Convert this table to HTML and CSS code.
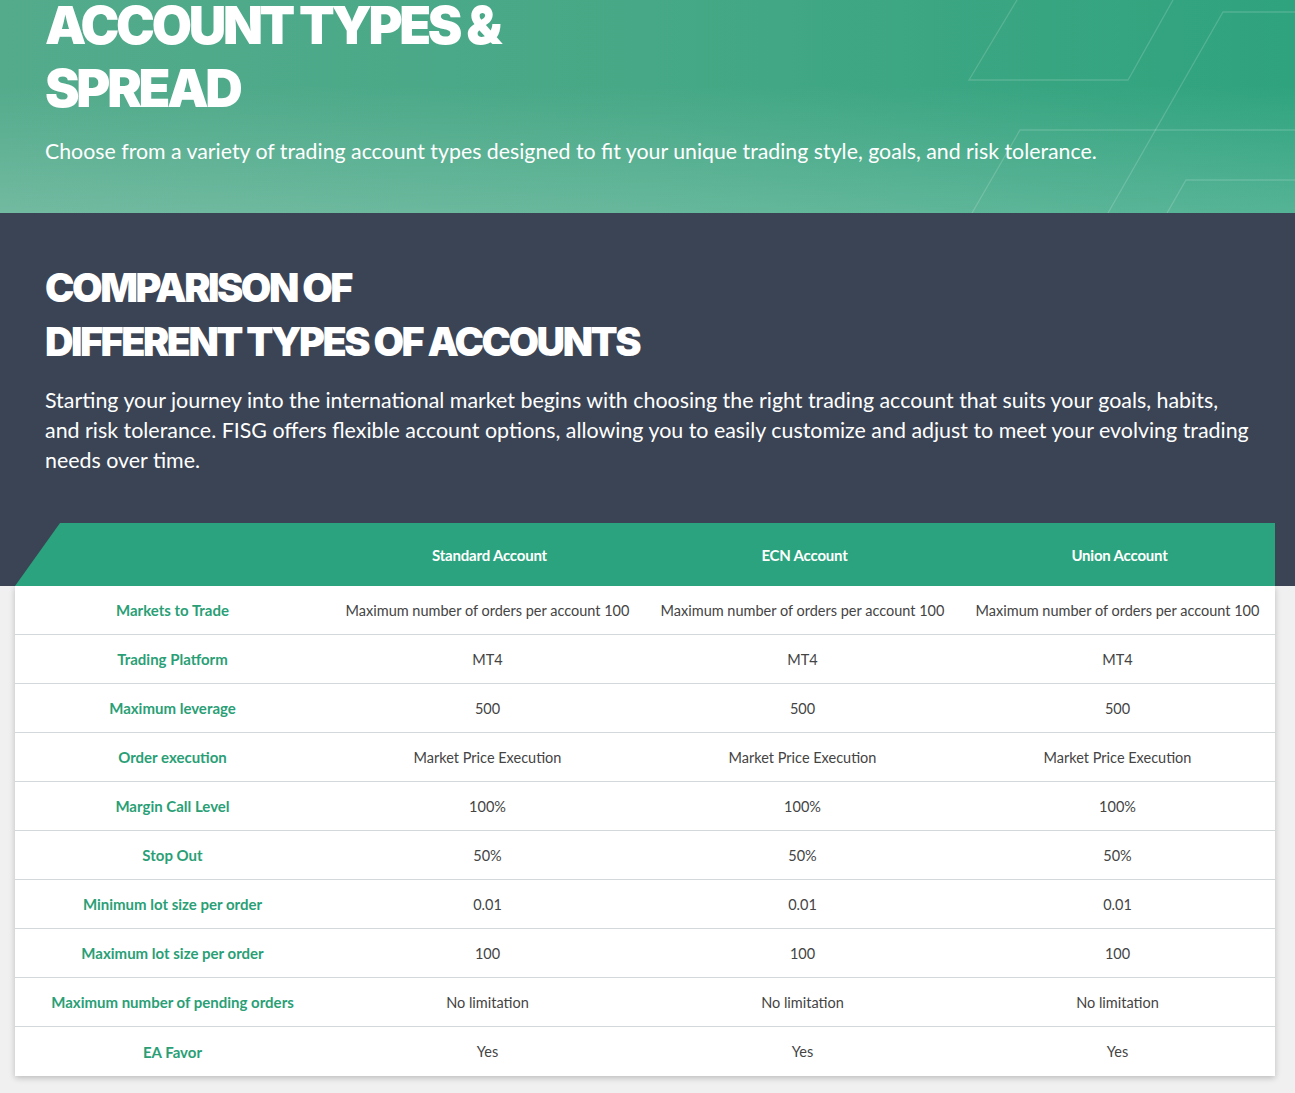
FILE: index.html
```html
<!DOCTYPE html>
<html lang="en">
<head>
<meta charset="utf-8">
<title>Account Types &amp; Spread</title>
<link rel="stylesheet" href="styles.css">
</head>
<body>
<section class="hero">
  <svg class="hero-lines" width="420" height="213" viewBox="0 0 420 213" fill="none" stroke="rgba(255,255,255,0.16)" stroke-width="1.3">
    <polyline points="142,0 94,80 253,80 298,0"/>
    <polyline points="233,213 348,12 420,12"/>
    <polyline points="97,213 145,130 420,130"/>
    <polyline points="292,213 311,180 420,180"/>
  </svg>
  <div class="hero-inner">
    <h1 class="hero-title">ACCOUNT TYPES &amp;<br>SPREAD</h1>
    <p class="hero-sub">Choose from a variety of trading account types designed to fit your unique trading style, goals, and risk tolerance.</p>
  </div>
</section>

<section class="compare">
  <h2 class="compare-title">COMPARISON OF<br>DIFFERENT TYPES OF ACCOUNTS</h2>
  <p class="compare-text">Starting your journey into the international market begins with choosing the right trading account that suits your goals, habits, and risk tolerance. FISG offers flexible account options, allowing you to easily customize and adjust to meet your evolving trading needs over time.</p>
  <div class="thead">
    <div class="th"></div>
    <div class="th">Standard Account</div>
    <div class="th">ECN Account</div>
    <div class="th">Union Account</div>
  </div>
</section>

<section class="table-wrap">
  <div class="tbody">
    <div class="tr"><div class="td label">Markets to Trade</div><div class="td">Maximum number of orders per account 100</div><div class="td">Maximum number of orders per account 100</div><div class="td">Maximum number of orders per account 100</div></div>
    <div class="tr"><div class="td label">Trading Platform</div><div class="td">MT4</div><div class="td">MT4</div><div class="td">MT4</div></div>
    <div class="tr"><div class="td label">Maximum leverage</div><div class="td">500</div><div class="td">500</div><div class="td">500</div></div>
    <div class="tr"><div class="td label">Order execution</div><div class="td">Market Price Execution</div><div class="td">Market Price Execution</div><div class="td">Market Price Execution</div></div>
    <div class="tr"><div class="td label">Margin Call Level</div><div class="td">100%</div><div class="td">100%</div><div class="td">100%</div></div>
    <div class="tr"><div class="td label">Stop Out</div><div class="td">50%</div><div class="td">50%</div><div class="td">50%</div></div>
    <div class="tr"><div class="td label">Minimum lot size per order</div><div class="td">0.01</div><div class="td">0.01</div><div class="td">0.01</div></div>
    <div class="tr"><div class="td label">Maximum lot size per order</div><div class="td">100</div><div class="td">100</div><div class="td">100</div></div>
    <div class="tr"><div class="td label">Maximum number of pending orders</div><div class="td">No limitation</div><div class="td">No limitation</div><div class="td">No limitation</div></div>
    <div class="tr"><div class="td label">EA Favor</div><div class="td">Yes</div><div class="td">Yes</div><div class="td">Yes</div></div>
  </div>
</section>
</body>
</html>
```

FILE: styles.css
```css
* { box-sizing: border-box; }
html, body { margin: 0; padding: 0; }
body {
  background: #f0f0f0;
  font-family: Lato, "Noto Sans", sans-serif;
  color: #444;
  overflow: hidden;
}

.hero {
  position: relative;
  height: 213px;
  overflow: hidden;
  background:
    linear-gradient(180deg, rgba(255,255,255,0) 40%, rgba(255,255,255,0.18) 100%),
    linear-gradient(90deg, #53ab8c 0%, #46a886 50%, #2fa37e 100%);
}
.hero-lines {
  position: absolute;
  right: 0;
  top: 0;
}
.hero-inner {
  position: relative;
  padding: 0 45px;
}
.hero-title {
  margin: -6px 0 0;
  font-family: Inter, Lato, sans-serif;
  font-weight: 900;
  font-size: 52px;
  line-height: 63px;
  letter-spacing: -3.3px;
  color: #fff;
}
.hero-sub {
  margin: 16px 0 0;
  font-size: 21.3px;
  line-height: 30px;
  color: #fff;
}

.compare {
  background: #3a4455;
  padding: 48px 0 0;
}
.compare-title {
  margin: 0 45px;
  font-family: Inter, Lato, sans-serif;
  font-weight: 900;
  font-size: 39.5px;
  line-height: 54px;
  letter-spacing: -2.5px;
  color: #fff;
}
.compare-text {
  margin: 16px 45px 0;
  font-size: 21.4px;
  line-height: 30px;
  color: #fff;
}

.thead {
  margin: 48px 20px 0 15px;
  height: 63px;
  display: grid;
  grid-template-columns: repeat(4, 1fr);
  background: #2aa37e;
  clip-path: polygon(45px 0, 100% 0, 100% 100%, 0 100%);
}
.th {
  display: flex;
  align-items: center;
  justify-content: center;
  color: #fff;
  font-weight: 700;
  font-size: 15px;
  letter-spacing: -0.2px;
  padding-left: 4px;
}

.table-wrap {
  padding: 0 20px 20px 15px;
}
.tbody {
  background: #fff;
  box-shadow: 0 2px 6px rgba(0,0,0,0.22);
}
.tr {
  display: grid;
  grid-template-columns: repeat(4, 1fr);
  height: 49px;
  border-bottom: 1px solid #d3d8db;
}
.tr:last-child { border-bottom: none; }
.td {
  display: flex;
  align-items: center;
  justify-content: center;
  font-size: 14.5px;
  color: #444;
  white-space: nowrap;
}
.td.label {
  color: #2a9f76;
  font-weight: 700;
  font-size: 15px;
}
```
